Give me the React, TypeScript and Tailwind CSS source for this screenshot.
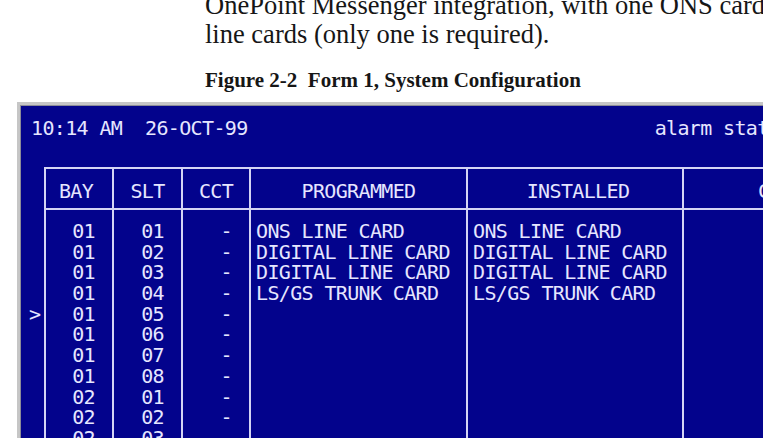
type SlotRow = {
  bay: string;
  slot: string;
  cct: string;
  programmed: string;
  installed: string;
  cursor?: boolean;
};

const slots: SlotRow[] = [
  { bay: "01", slot: "01", cct: "-", programmed: "ONS LINE CARD", installed: "ONS LINE CARD" },
  { bay: "01", slot: "02", cct: "-", programmed: "DIGITAL LINE CARD", installed: "DIGITAL LINE CARD" },
  { bay: "01", slot: "03", cct: "-", programmed: "DIGITAL LINE CARD", installed: "DIGITAL LINE CARD" },
  { bay: "01", slot: "04", cct: "-", programmed: "LS/GS TRUNK CARD", installed: "LS/GS TRUNK CARD" },
  { bay: "01", slot: "05", cct: "-", programmed: "", installed: "", cursor: true },
  { bay: "01", slot: "06", cct: "-", programmed: "", installed: "" },
  { bay: "01", slot: "07", cct: "-", programmed: "", installed: "" },
  { bay: "01", slot: "08", cct: "-", programmed: "", installed: "" },
  { bay: "02", slot: "01", cct: "-", programmed: "", installed: "" },
  { bay: "02", slot: "02", cct: "-", programmed: "", installed: "" },
  { bay: "02", slot: "03", cct: "-", programmed: "", installed: "" },
];

function Cell({ children }: { children?: string }) {
  return <div className="h-[20.7px] whitespace-pre">{children || " "}</div>;
}

function ConfigScreen() {
  return (
    <div className="ml-[17px] w-[820px] flex-1 overflow-hidden bg-[#c6c6c6] pl-[3px] pt-[3px]">
      <div className="h-full border-l border-t border-[#8c8c98] bg-[#03038c] pt-[12px] font-['DejaVu_Sans_Mono',monospace] text-[20px] leading-[20px] tracking-[-0.64px] text-[#e6e6ff]">
        <div className="flex whitespace-pre pl-[10px]">
          <span>10:14 AM  26-OCT-99</span>
          <span className="ml-[407px]">alarm status</span>
        </div>

        {/* column headings */}
        <div className="mt-[29px] flex">
          <div className="w-[23px] shrink-0" />
          <div className="flex border-y-2 border-[#d4d4f4]">
            <div className="h-[39px] w-[68px] border-l-2 border-[#d4d4f4] pr-[6px] pt-[12px] text-center">BAY</div>
            <div className="h-[39px] w-[69px] border-l-2 border-[#d4d4f4] pt-[12px] text-center">SLT</div>
            <div className="h-[39px] w-[68px] border-l-2 border-[#d4d4f4] pt-[12px] text-center">CCT</div>
            <div className="h-[39px] w-[217px] border-l-2 border-[#d4d4f4] pt-[12px] text-center">PROGRAMMED</div>
            <div className="h-[39px] w-[216px] border-l-2 border-[#d4d4f4] pl-[6px] pt-[12px] text-center">INSTALLED</div>
            <div className="h-[39px] w-[216px] border-l-2 border-[#d4d4f4] pl-[74px] pt-[12px]">COMMENTS</div>
          </div>
        </div>

        {/* slot rows */}
        <div className="flex leading-[20.7px]">
          <div className="w-[23px] shrink-0 pl-[8px] pt-[11px]">
            {slots.map((row, i) => (
              <Cell key={i}>{row.cursor ? ">" : ""}</Cell>
            ))}
          </div>
          <div className="w-[68px] shrink-0 border-l-2 border-[#d4d4f4] pr-[17px] pt-[11px] text-right">
            {slots.map((row, i) => (
              <Cell key={i}>{row.bay}</Cell>
            ))}
          </div>
          <div className="w-[69px] shrink-0 border-l-2 border-[#d4d4f4] pr-[17px] pt-[11px] text-right">
            {slots.map((row, i) => (
              <Cell key={i}>{row.slot}</Cell>
            ))}
          </div>
          <div className="w-[68px] shrink-0 border-l-2 border-[#d4d4f4] pr-[17px] pt-[11px] text-right">
            {slots.map((row, i) => (
              <Cell key={i}>{row.cct}</Cell>
            ))}
          </div>
          <div className="w-[217px] shrink-0 border-l-2 border-[#d4d4f4] pl-[5px] pt-[11px]">
            {slots.map((row, i) => (
              <Cell key={i}>{row.programmed}</Cell>
            ))}
          </div>
          <div className="w-[216px] shrink-0 border-l-2 border-[#d4d4f4] pl-[5px] pt-[11px]">
            {slots.map((row, i) => (
              <Cell key={i}>{row.installed}</Cell>
            ))}
          </div>
          <div className="w-[216px] shrink-0 border-l-2 border-[#d4d4f4]" />
        </div>
      </div>
    </div>
  );
}

export default function App() {
  return (
    <div className="flex h-[438px] w-[763px] flex-col overflow-hidden bg-white">
      <div className="-mt-[9px] pl-[205px] font-['Liberation_Serif',serif] text-[26.5px] leading-[29px] text-[#161616]">
        <div className="whitespace-nowrap">OnePoint Messenger integration, with one ONS card and two digital</div>
        <div className="whitespace-nowrap">line cards (only one is required).</div>
      </div>
      <div className="mt-[19px] whitespace-pre pl-[205px] font-['Liberation_Serif',serif] text-[21px] font-bold leading-[24px] text-[#161616]">
        Figure 2-2  Form 1, System Configuration
      </div>
      <div className="mt-[10px] flex flex-1 overflow-hidden">
        <ConfigScreen />
      </div>
    </div>
  );
}
